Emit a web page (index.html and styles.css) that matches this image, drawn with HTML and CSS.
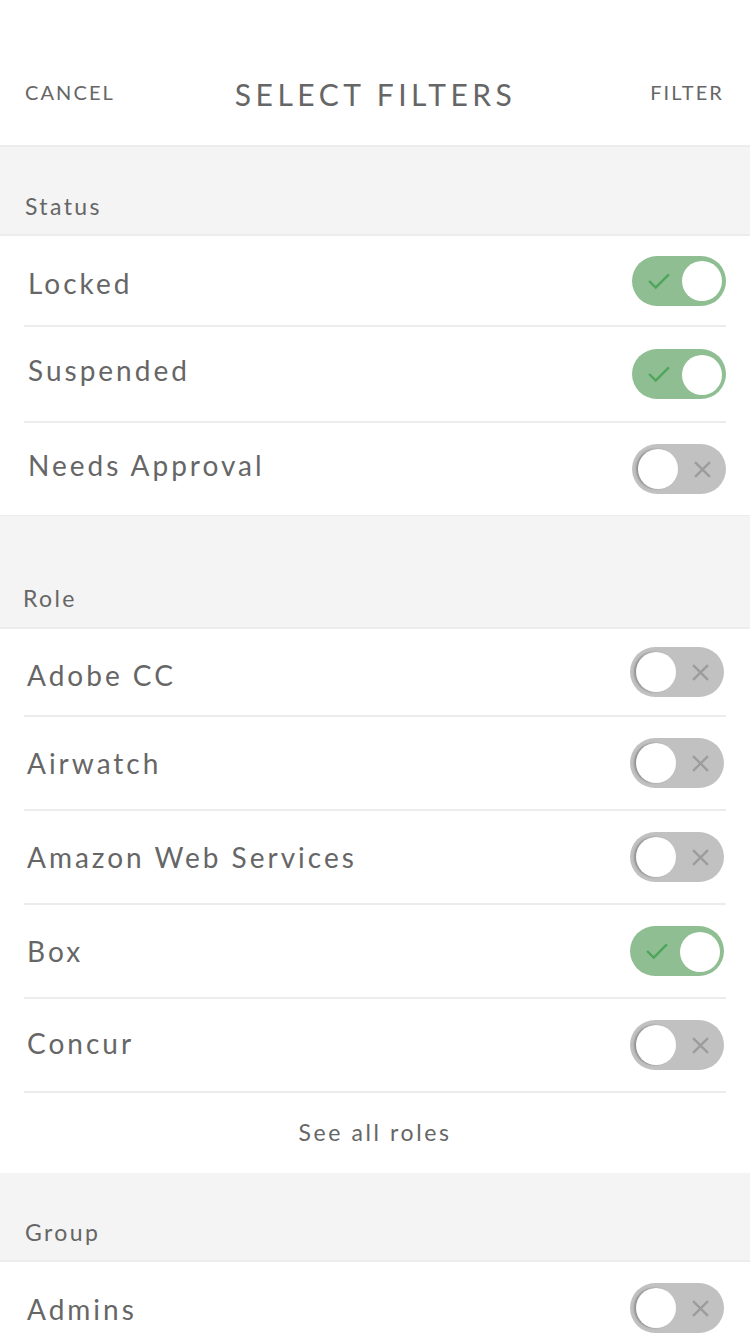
FILE: index.html
```html
<!DOCTYPE html>
<html>
<head>
<meta charset="utf-8">
<link rel="stylesheet" href="styles.css">
</head>
<body>
<div class="page">
  <header class="topbar">
    <span class="action">CANCEL</span>
    <span class="title">SELECT FILTERS</span>
    <span class="action">FILTER</span>
  </header>

  <div class="section-head">Status</div>
  <ul class="list list-status">
    <li class="row r1 nudge-down"><span class="label">Locked</span><span class="toggle on"><svg class="mark" viewBox="0 0 20 16"><path d="M1 8 L7 14 L19 2"/></svg><span class="knob"></span></span></li>
    <li class="row r2 nudge-up"><span class="label">Suspended</span><span class="toggle on"><svg class="mark" viewBox="0 0 20 16"><path d="M1 8 L7 14 L19 2"/></svg><span class="knob"></span></span></li>
    <li class="row last nudge-up"><span class="label">Needs Approval</span><span class="toggle off"><span class="knob"></span><svg class="mark" viewBox="0 0 16 16"><path d="M1 1 L15 15 M15 1 L1 15"/></svg></span></li>
  </ul>

  <div class="section-head tall">Role</div>
  <ul class="list list-role">
    <li class="row r1 nudge-down2"><span class="label">Adobe CC</span><span class="toggle off"><span class="knob"></span><svg class="mark" viewBox="0 0 16 16"><path d="M1 1 L15 15 M15 1 L1 15"/></svg></span></li>
    <li class="row"><span class="label">Airwatch</span><span class="toggle off"><span class="knob"></span><svg class="mark" viewBox="0 0 16 16"><path d="M1 1 L15 15 M15 1 L1 15"/></svg></span></li>
    <li class="row"><span class="label">Amazon Web Services</span><span class="toggle off"><span class="knob"></span><svg class="mark" viewBox="0 0 16 16"><path d="M1 1 L15 15 M15 1 L1 15"/></svg></span></li>
    <li class="row"><span class="label">Box</span><span class="toggle on"><svg class="mark" viewBox="0 0 20 16"><path d="M1 8 L7 14 L19 2"/></svg><span class="knob"></span></span></li>
    <li class="row nudge-up-small"><span class="label">Concur</span><span class="toggle off"><span class="knob"></span><svg class="mark" viewBox="0 0 16 16"><path d="M1 1 L15 15 M15 1 L1 15"/></svg></span></li>
    <li class="see-all">See all roles</li>
  </ul>

  <div class="section-head">Group</div>
  <ul class="list list-role">
    <li class="row nudge-down-small"><span class="label">Admins</span><span class="toggle off"><span class="knob"></span><svg class="mark" viewBox="0 0 16 16"><path d="M1 1 L15 15 M15 1 L1 15"/></svg></span></li>
  </ul>
</div>
</body>
</html>
```
FILE: styles.css
```css
html, body {
  margin: 0;
  padding: 0;
  background: #ffffff;
}
body {
  font-family: "Lato", "Open Sans", "Liberation Sans", sans-serif;
  color: #666666;
  overflow: hidden;
  height: 1334px;
}
.page {
  width: 750px;
}
.topbar {
  height: 147px;
  box-sizing: border-box;
  padding: 44px 26px 0 25px;
  display: flex;
  align-items: center;
  justify-content: space-between;
  border-bottom: 2px solid #ececec;
}
.action {
  font-size: 20px;
  letter-spacing: 2.1px;
  color: #666;
  padding-bottom: 6px;
}
.title {
  font-size: 30px;
  letter-spacing: 4.5px;
  color: #666;
  margin-right: 14px;
  padding-bottom: 1px;
}
.section-head {
  height: 89px;
  box-sizing: border-box;
  background: #f4f4f4;
  display: flex;
  align-items: flex-end;
  padding: 0 0 14px 25px;
  font-size: 23px;
  letter-spacing: 2.4px;
  color: #666;
  border-bottom: 2px solid #ececec;
}
.section-head.tall {
  height: 114px;
  padding-left: 23px;
  padding-bottom: 15px;
  border-top: 1px solid #ececec;
}
.list {
  list-style: none;
  margin: 0;
  padding: 0 24px;
}
.row {
  height: 94px;
  box-sizing: border-box;
  display: flex;
  align-items: center;
  justify-content: space-between;
  border-bottom: 2px solid #ececec;
}
.list-status .r1 {
  height: 91px;
}
.list-status .r2 {
  height: 96px;
}
.row.last {
  border-bottom: none;
  height: 92px;
}
.list-role .r1 {
  height: 88px;
}
.label {
  font-size: 28px;
  letter-spacing: 3px;
  color: #666;
  padding-left: 4px;
}
.nudge-down .label {
  padding-top: 4px;
}
.nudge-down2 .label {
  padding-top: 6px;
}
.nudge-down-small .label {
  padding-top: 2px;
}
.nudge-up .label {
  padding-bottom: 8px;
}
.nudge-up-small .label {
  padding-bottom: 4px;
}
.list-role .label {
  padding-left: 3px;
}
.list-role .toggle {
  margin-right: 2px;
}
.toggle {
  width: 94px;
  height: 50px;
  border-radius: 25px;
  box-sizing: border-box;
  display: flex;
  align-items: center;
  padding: 0 4px;
  position: relative;
}
.toggle.on {
  background: #8fbe92;
  justify-content: space-between;
  padding-left: 16px;
}
.toggle.off {
  background: #c1c1c1;
  justify-content: space-between;
  padding-right: 15px;
}
.knob {
  width: 40px;
  height: 40px;
  border-radius: 50%;
  background: #ffffff;
}
.toggle.on .knob {
  margin-top: 1px;
}
.toggle.off .knob {
  box-shadow: -2px 0 2px rgba(0,0,0,0.25);
  margin-left: 2px;
}
.mark {
  fill: none;
  stroke-width: 2.2px;
}
.toggle.on .mark {
  width: 22px;
  height: 18px;
  stroke: #4fa55c;
}
.toggle.off .mark {
  width: 17px;
  height: 17px;
  stroke: #9c9c9c;
}
.see-all {
  height: 80px;
  box-sizing: border-box;
  padding-bottom: 2px;
  display: flex;
  align-items: center;
  justify-content: center;
  font-size: 23px;
  letter-spacing: 2.6px;
  color: #666;
}
```
